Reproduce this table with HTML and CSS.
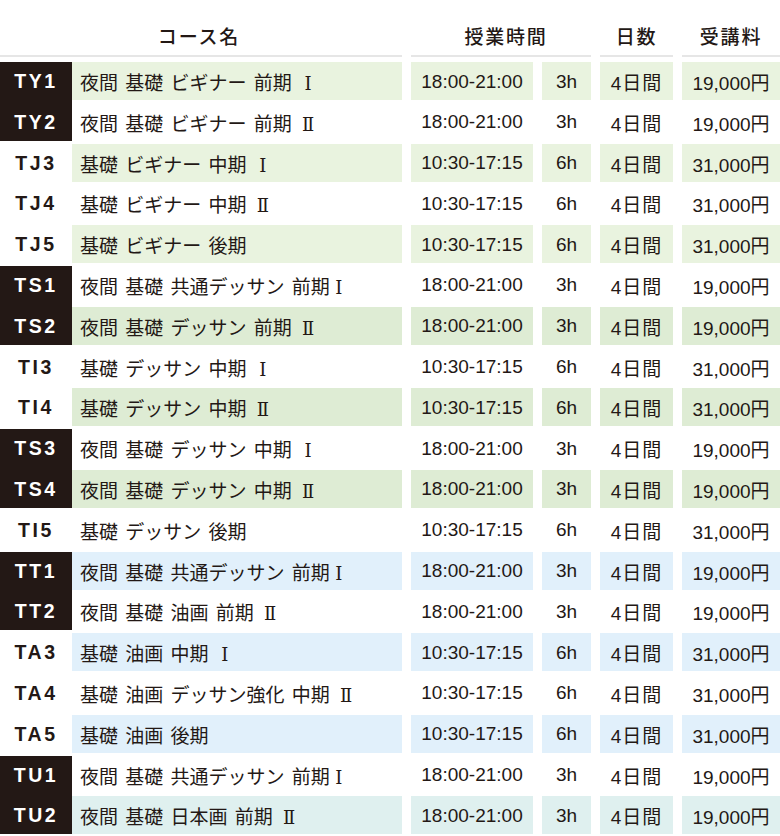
FILE: index.html
```html
<!DOCTYPE html>
<html lang="ja">
<head>
<meta charset="utf-8">
<title>コース一覧</title>
<link rel="stylesheet" href="styles.css">
</head>
<body>
<div class="table">
  <div class="head">
    <div class="hc h-name">コース名</div>
    <div class="hc h-time">授業時間</div>
    <div class="hc h-days">日数</div>
    <div class="hc h-fee">受講料</div>
  </div>
  <div class="body">
    <div class="lab dark pair"><span>TY1</span><span>TY2</span></div>
    <div class="c name g1">夜間 基礎 ビギナー 前期 <span class="rn">Ⅰ</span></div><div class="c num time g1">18:00-21:00</div><div class="c num hrs g1">3h</div><div class="c num days g1">4日間</div><div class="c num fee g1">19,000円</div>
    <div class="c name">夜間 基礎 ビギナー 前期 <span class="rn">Ⅱ</span></div><div class="c num time">18:00-21:00</div><div class="c num hrs">3h</div><div class="c num days">4日間</div><div class="c num fee">19,000円</div>

    <div class="lab"><span>TJ3</span></div>
    <div class="c name g1">基礎 ビギナー 中期 <span class="rn">Ⅰ</span></div><div class="c num time g1">10:30-17:15</div><div class="c num hrs g1">6h</div><div class="c num days g1">4日間</div><div class="c num fee g1">31,000円</div>
    <div class="lab"><span>TJ4</span></div>
    <div class="c name">基礎 ビギナー 中期 <span class="rn">Ⅱ</span></div><div class="c num time">10:30-17:15</div><div class="c num hrs">6h</div><div class="c num days">4日間</div><div class="c num fee">31,000円</div>
    <div class="lab"><span>TJ5</span></div>
    <div class="c name g1">基礎 ビギナー 後期</div><div class="c num time g1">10:30-17:15</div><div class="c num hrs g1">6h</div><div class="c num days g1">4日間</div><div class="c num fee g1">31,000円</div>

    <div class="lab dark pair"><span>TS1</span><span>TS2</span></div>
    <div class="c name">夜間 基礎 共通デッサン 前期<span class="rn">Ⅰ</span></div><div class="c num time">18:00-21:00</div><div class="c num hrs">3h</div><div class="c num days">4日間</div><div class="c num fee">19,000円</div>
    <div class="c name g2">夜間 基礎 デッサン 前期 <span class="rn">Ⅱ</span></div><div class="c num time g2">18:00-21:00</div><div class="c num hrs g2">3h</div><div class="c num days g2">4日間</div><div class="c num fee g2">19,000円</div>

    <div class="lab"><span>TI3</span></div>
    <div class="c name">基礎 デッサン 中期 <span class="rn">Ⅰ</span></div><div class="c num time">10:30-17:15</div><div class="c num hrs">6h</div><div class="c num days">4日間</div><div class="c num fee">31,000円</div>
    <div class="lab"><span>TI4</span></div>
    <div class="c name g2">基礎 デッサン 中期 <span class="rn">Ⅱ</span></div><div class="c num time g2">10:30-17:15</div><div class="c num hrs g2">6h</div><div class="c num days g2">4日間</div><div class="c num fee g2">31,000円</div>

    <div class="lab dark pair"><span>TS3</span><span>TS4</span></div>
    <div class="c name">夜間 基礎 デッサン 中期 <span class="rn">Ⅰ</span></div><div class="c num time">18:00-21:00</div><div class="c num hrs">3h</div><div class="c num days">4日間</div><div class="c num fee">19,000円</div>
    <div class="c name g2">夜間 基礎 デッサン 中期 <span class="rn">Ⅱ</span></div><div class="c num time g2">18:00-21:00</div><div class="c num hrs g2">3h</div><div class="c num days g2">4日間</div><div class="c num fee g2">19,000円</div>

    <div class="lab"><span>TI5</span></div>
    <div class="c name">基礎 デッサン 後期</div><div class="c num time">10:30-17:15</div><div class="c num hrs">6h</div><div class="c num days">4日間</div><div class="c num fee">31,000円</div>

    <div class="lab dark pair"><span>TT1</span><span>TT2</span></div>
    <div class="c name b">夜間 基礎 共通デッサン 前期<span class="rn">Ⅰ</span></div><div class="c num time b">18:00-21:00</div><div class="c num hrs b">3h</div><div class="c num days b">4日間</div><div class="c num fee b">19,000円</div>
    <div class="c name">夜間 基礎 油画 前期 <span class="rn">Ⅱ</span></div><div class="c num time">18:00-21:00</div><div class="c num hrs">3h</div><div class="c num days">4日間</div><div class="c num fee">19,000円</div>

    <div class="lab"><span>TA3</span></div>
    <div class="c name b">基礎 油画 中期 <span class="rn">Ⅰ</span></div><div class="c num time b">10:30-17:15</div><div class="c num hrs b">6h</div><div class="c num days b">4日間</div><div class="c num fee b">31,000円</div>
    <div class="lab"><span>TA4</span></div>
    <div class="c name">基礎 油画 デッサン強化 中期 <span class="rn">Ⅱ</span></div><div class="c num time">10:30-17:15</div><div class="c num hrs">6h</div><div class="c num days">4日間</div><div class="c num fee">31,000円</div>
    <div class="lab"><span>TA5</span></div>
    <div class="c name b">基礎 油画 後期</div><div class="c num time b">10:30-17:15</div><div class="c num hrs b">6h</div><div class="c num days b">4日間</div><div class="c num fee b">31,000円</div>

    <div class="lab dark pair"><span>TU1</span><span>TU2</span></div>
    <div class="c name">夜間 基礎 共通デッサン 前期<span class="rn">Ⅰ</span></div><div class="c num time">18:00-21:00</div><div class="c num hrs">3h</div><div class="c num days">4日間</div><div class="c num fee">19,000円</div>
    <div class="c name t">夜間 基礎 日本画 前期 <span class="rn">Ⅱ</span></div><div class="c num time t">18:00-21:00</div><div class="c num hrs t">3h</div><div class="c num days t">4日間</div><div class="c num fee t">19,000円</div>
  </div>
</div>
</body>
</html>
```
FILE: styles.css
```css
html, body {
  margin: 0;
  padding: 0;
  background: #ffffff;
}

body {
  width: 780px;
  color: #231815;
  font-family: "Noto Sans CJK JP", "Liberation Sans", sans-serif;
}

.table {
  width: 780px;
}

.head,
.body {
  display: grid;
  grid-template-columns: 72px 330px 131px 58px 82px 107px;
  column-gap: 0;
}

.head {
  margin-bottom: 5px;
}

.hc {
  box-sizing: border-box;
  height: 57px;
  padding-top: 15px;
  border-bottom: 2px solid #e6e6e6;
  display: flex;
  align-items: center;
  justify-content: center;
  font-size: 19px;
  font-weight: 500;
  letter-spacing: 1.8px;
  line-height: 1;
}

.h-name {
  grid-column: 1 / 3;
  padding-right: 4px;
}

.h-time {
  grid-column: 3 / 5;
  margin-left: 9px;
  padding-left: 10px;
}

.h-days {
  grid-column: 5;
  margin-left: 9px;
}

.h-fee {
  grid-column: 6;
  margin-left: 9px;
}

.body {
  grid-auto-rows: 38px;
  row-gap: 2.8px;
}

.lab {
  grid-column: 1;
  display: flex;
  flex-direction: column;
  row-gap: 2.8px;
  font-family: "Liberation Sans", Arial, sans-serif;
  font-weight: bold;
  font-size: 19.5px;
  letter-spacing: 2.6px;
  color: #231815;
}

.lab span {
  height: 38px;
  display: flex;
  align-items: center;
  justify-content: center;
  padding-top: 1px;
  box-sizing: border-box;
}

.lab.pair {
  grid-row: span 2;
}

.lab.dark {
  background: #231815;
  color: #ffffff;
}

.c {
  display: flex;
  align-items: center;
  font-size: 19px;
  white-space: nowrap;
  padding-top: 1px;
  box-sizing: border-box;
}

.name {
  display: block;
  grid-column: 2;
  padding-left: 8px;
  line-height: 37px;
  word-spacing: 3px;
}

.rn {
  display: inline-block;
  width: 1em;
  text-align: center;
  font-family: "DejaVu Serif", "Liberation Serif", serif;
  font-size: 18px;
  word-spacing: 0;
}

.num {
  justify-content: center;
  margin-left: 9px;
  font-family: "Liberation Sans", "Noto Sans CJK JP", sans-serif;
}

.days {
  letter-spacing: 1px;
}

.g1 { background: #e9f3df; }
.g2 { background: #deecd4; }
.b  { background: #e1f0fb; }
.t  { background: #dff0ef; }
```
